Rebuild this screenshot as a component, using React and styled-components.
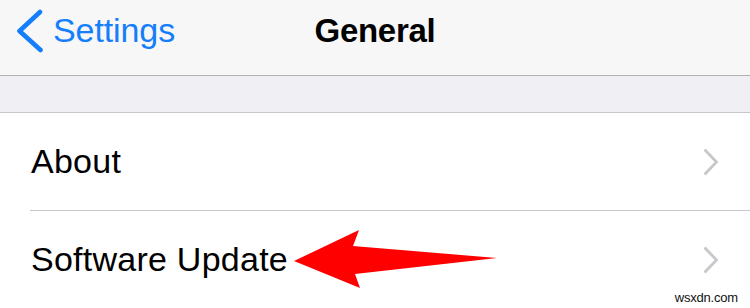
import React from "react";
import styled, { createGlobalStyle } from "styled-components";

const GlobalStyle = createGlobalStyle`
  html, body {
    margin: 0;
    padding: 0;
    background: #ffffff;
  }
  body {
    font-family: "Liberation Sans", Arial, sans-serif;
    overflow: hidden;
  }
`;

function BackChevron() {
  return (
    <svg width="30" height="44" viewBox="0 0 30 44">
      <polyline
        points="25,3 4.5,22 25.5,41"
        fill="none"
        stroke="#157efb"
        strokeWidth="4.6"
        strokeLinecap="round"
        strokeLinejoin="round"
      />
    </svg>
  );
}

function Disclosure() {
  return (
    <svg width="18" height="28" viewBox="0 0 18 28">
      <polyline
        points="3.5,2.5 14.5,14 3.5,25.5"
        fill="none"
        stroke="#c7c7cc"
        strokeWidth="2.8"
        strokeLinecap="square"
      />
    </svg>
  );
}

function RedArrow() {
  return (
    <svg width="204" height="60" viewBox="0 0 204 60">
      <polygon
        points="0,31 65,0 59,16 203,28 61,44 66,58"
        fill="#ff0000"
      />
    </svg>
  );
}

function App() {
  return (
    <Page>
      <GlobalStyle />
      <NavBar>
        <BackButton>
          <BackChevron />
          <span>Settings</span>
        </BackButton>
        <Title>General</Title>
        <div />
      </NavBar>
      <SectionGap />
      <Group>
        <Cell>
          <CellLabel>About</CellLabel>
          <Disclosure />
        </Cell>
        <Cell last>
          <LabelWrap>
            <CellLabel>Software Update</CellLabel>
            <RedArrow />
          </LabelWrap>
          <Disclosure />
        </Cell>
      </Group>
      <Watermark>wsxdn.com</Watermark>
    </Page>
  );
}

export default App;

const Page = styled.div`
  position: relative;
  width: 750px;
  height: 308px;
  overflow: hidden;
  background: #ffffff;
`;

const NavBar = styled.div`
  display: grid;
  grid-template-columns: 1fr auto 1fr;
  align-items: center;
  height: 76px;
  padding-bottom: 14px;
  box-sizing: border-box;
  background: #f7f7f8;
  border-bottom: 1px solid #b2b2b6;
`;

const BackButton = styled.div`
  display: flex;
  align-items: center;
  gap: 8px;
  padding-left: 15px;
  color: #157efb;
  font-size: 34px;
  letter-spacing: -0.1px;
`;

const Title = styled.div`
  font-size: 33px;
  font-weight: 700;
  color: #000000;
  letter-spacing: -0.3px;
`;

const SectionGap = styled.div`
  height: 36px;
  background: #efeff4;
  border-bottom: 1px solid #c8c7cc;
`;

const Group = styled.div`
  display: flex;
  flex-direction: column;
  padding-left: 30px;
  background: #ffffff;
`;

const Cell = styled.div`
  display: flex;
  align-items: center;
  justify-content: space-between;
  height: 97px;
  padding-right: 30px;
  border-bottom: ${(p) => (p.last ? "none" : "1px solid #c8c7cc")};
`;

const LabelWrap = styled.div`
  display: flex;
  align-items: center;
  gap: 6px;
`;

const CellLabel = styled.span`
  font-size: 34px;
  color: #000000;
  padding-left: 1px;
  letter-spacing: 0.25px;
`;

const Watermark = styled.div`
  position: absolute;
  right: 12px;
  bottom: 3px;
  font-family: "Liberation Sans", Arial, sans-serif;
  font-size: 13px;
  letter-spacing: -0.2px;
  color: #111111;
`;
